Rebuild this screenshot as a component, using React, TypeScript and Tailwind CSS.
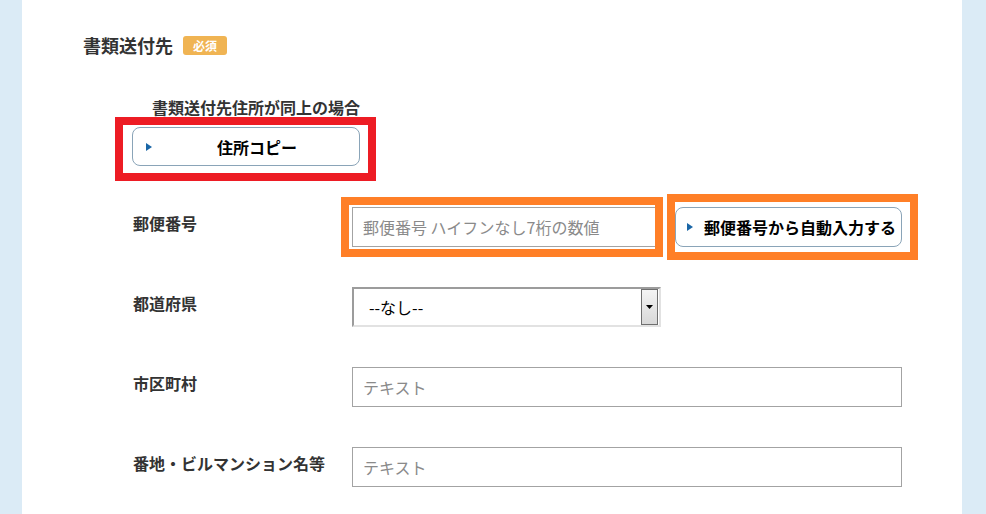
import React from 'react'

const font = { fontFamily: '"Noto Sans CJK JP", "Noto Sans", sans-serif' }

function Arrow() {
  return (
    <svg width="6" height="8" viewBox="0 0 6 8" className="shrink-0">
      <path d="M0 0 L6 4 L0 8 Z" fill="#1a66a6" />
    </svg>
  )
}

function Field({ label, children }: { label: string; children: React.ReactNode }) {
  return (
    <div className="flex h-[40px] items-start">
      <div className="w-[219px] shrink-0 pt-[5px] text-[16px] font-bold leading-[22px] text-[#333]">{label}</div>
      {children}
    </div>
  )
}

function TextInput({ placeholder, width }: { placeholder: string; width: string }) {
  return (
    <input
      placeholder={placeholder}
      className={`${width} h-[40px] border border-[#a3a3a3] bg-white px-[10px] text-[16px] text-[#333] outline-none placeholder:text-[#8a8a8a]`}
      style={font}
    />
  )
}

export default function App() {
  return (
    <div className="flex h-[514px] w-full overflow-hidden bg-white" style={font}>
      <div className="w-[22px] shrink-0 bg-[#dbebf6]" />
      <main className="flex-1 pl-[61px] pt-[34px]">
        <div className="flex h-[22px] items-center gap-[10px]">
          <h2 className="text-[18px] font-bold leading-[22px] text-[#333]">書類送付先</h2>
          <span className="h-[19px] rounded-[3px] bg-[#f0b453] px-[10px] text-[12px] font-bold leading-[19px] text-white">必須</span>
        </div>

        <div className="ml-[49px] mt-[40px]">
          <p className="ml-[20px] text-[16px] font-bold leading-[22px] text-[#333]">書類送付先住所が同上の場合</p>
          <div className="relative mt-[9px] w-[228px]">
            <button className="flex h-[39px] w-full items-center rounded-[8px] border border-[#8aa4b8] bg-white px-[13px]">
              <Arrow />
              <span className="flex-1 pl-[16px] text-center text-[16px] font-bold text-black">住所コピー</span>
            </button>
            <span className="pointer-events-none absolute -left-[17px] -top-[10px] h-[64px] w-[261px] border-8 border-[#ed1c24]" />
          </div>
        </div>

        <div className="ml-[50px] mt-[41px] flex flex-col gap-[40px]">
          <Field label="郵便番号">
            <div className="relative">
              <TextInput placeholder="郵便番号 ハイフンなし7桁の数値" width="w-[310px]" />
              <span className="pointer-events-none absolute -left-[11px] -top-[10px] h-[60px] w-[322px] border-8 border-[#ff7f27]" />
            </div>
            <div className="relative ml-[13px]">
              <button className="flex h-[40px] w-[227px] items-center gap-[11px] rounded-[8px] border border-[#8aa4b8] bg-white pl-[11px]">
                <Arrow />
                <span className="text-[16px] font-bold text-black">郵便番号から自動入力する</span>
              </button>
              <span className="pointer-events-none absolute -left-[8px] -top-[13px] h-[66px] w-[251px] border-8 border-[#ff7f27]" />
            </div>
          </Field>

          <Field label="都道府県">
            <div className="flex h-[40px] w-[309px] items-center border-2 border-[#9c9c9c] border-b-[#e2e2e2] border-r-[#e2e2e2] bg-white pr-[1px]">
              <span className="flex-1 pl-[15px] text-[16px] text-black">--なし--</span>
              <span className="flex h-[36px] w-[17px] items-center justify-center border border-[#6f6f6f] bg-gradient-to-b from-[#f4f4f4] to-[#d8d8d8]">
                <svg width="7" height="4" viewBox="0 0 7 4">
                  <path d="M0 0 H7 L3.5 4 Z" fill="#000" />
                </svg>
              </span>
            </div>
          </Field>

          <Field label="市区町村">
            <TextInput placeholder="テキスト" width="w-[550px]" />
          </Field>

          <Field label="番地・ビルマンション名等">
            <TextInput placeholder="テキスト" width="w-[550px]" />
          </Field>
        </div>
      </main>
      <div className="w-[24px] shrink-0 bg-[#dbebf6]" />
    </div>
  )
}
